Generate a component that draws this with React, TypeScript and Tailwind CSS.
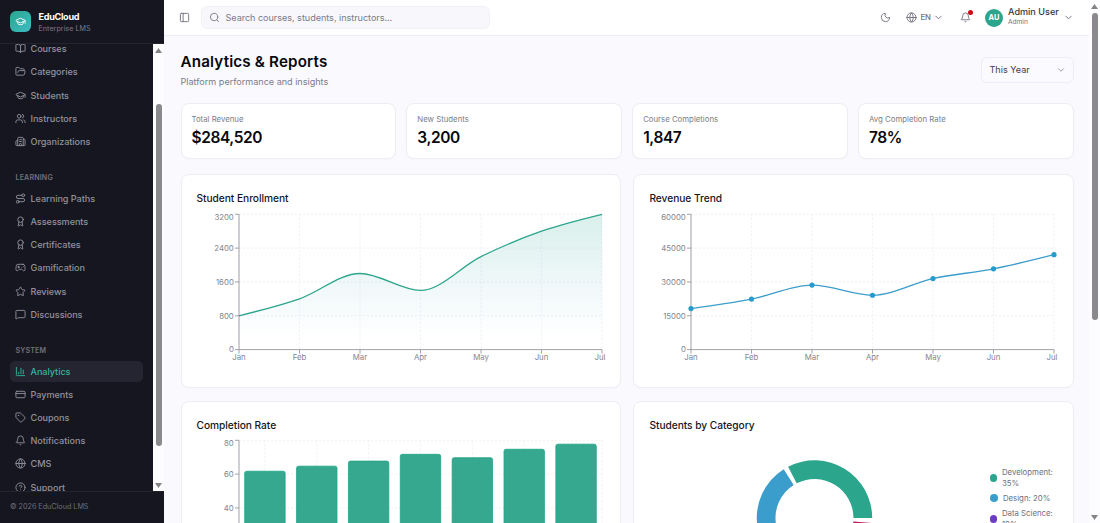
import React from 'react';
import {
  Award,
  Bell,
  BookOpen,
  Building2,
  ChartColumn,
  ChevronDown,
  CircleQuestionMark,
  CreditCard,
  FolderOpen,
  Gamepad2,
  Globe,
  GraduationCap,
  LucideIcon,
  MessageSquare,
  Moon,
  PanelLeft,
  Route,
  Search,
  Star,
  Tag,
  Users,
} from 'lucide-react';

interface NavEntry {
  label: string;
  icon: LucideIcon;
}

interface NavGroup {
  title?: string;
  items: NavEntry[];
}

const NAV: NavGroup[] = [
  {
    items: [
      { label: 'Courses', icon: BookOpen },
      { label: 'Categories', icon: FolderOpen },
      { label: 'Students', icon: GraduationCap },
      { label: 'Instructors', icon: Users },
      { label: 'Organizations', icon: Building2 },
    ],
  },
  {
    title: 'LEARNING',
    items: [
      { label: 'Learning Paths', icon: Route },
      { label: 'Assessments', icon: Award },
      { label: 'Certificates', icon: Award },
      { label: 'Gamification', icon: Gamepad2 },
      { label: 'Reviews', icon: Star },
      { label: 'Discussions', icon: MessageSquare },
    ],
  },
  {
    title: 'SYSTEM',
    items: [
      { label: 'Analytics', icon: ChartColumn },
      { label: 'Payments', icon: CreditCard },
      { label: 'Coupons', icon: Tag },
      { label: 'Notifications', icon: Bell },
      { label: 'CMS', icon: Globe },
      { label: 'Support', icon: CircleQuestionMark },
    ],
  },
];

const STATS = [
  { label: 'Total Revenue', value: '$284,520' },
  { label: 'New Students', value: '3,200' },
  { label: 'Course Completions', value: '1,847' },
  { label: 'Avg Completion Rate', value: '78%' },
];

const MONTHS = ['Jan', 'Feb', 'Mar', 'Apr', 'May', 'Jun', 'Jul'];
const ENROLLMENT = [800, 1200, 1800, 1400, 2200, 2800, 3200];
const REVENUE = [18200, 22400, 28600, 24100, 31500, 35800, 42100];
const COMPLETION = [62, 65, 68, 72, 70, 75, 78];

const CATEGORIES = [
  { name: 'Development', value: 35, color: '#2ca58d' },
  { name: 'Design', value: 20, color: '#3b9dcb' },
  { name: 'Data Science', value: 18, color: '#6d3cc4' },
  { name: 'Marketing', value: 15, color: '#e0a030' },
  { name: 'Business', value: 12, color: '#c2185b' },
];

// Plot area inside every chart
const LEFT = 42;
const RIGHT = 405;
const TOP = 3.3;
const HEIGHT = 135.3;
const BOTTOM = TOP + HEIGHT;

type Point = [number, number];

const toPoints = (values: number[], max: number): Point[] =>
  values.map((v, i) => [
    LEFT + (i * (RIGHT - LEFT)) / (values.length - 1),
    BOTTOM - (v / max) * HEIGHT,
  ]);

// Monotone cubic interpolation
const monotonePath = (pts: Point[]) => {
  const n = pts.length;
  const h = (pts[n - 1][0] - pts[0][0]) / (n - 1);
  const slopes = pts.slice(1).map((p, i) => (p[1] - pts[i][1]) / h);
  const tangents = pts.map((_, i) => {
    if (i === 0 || i === n - 1) return 0;
    const a = slopes[i - 1];
    const b = slopes[i];
    return (Math.sign(a) + Math.sign(b)) * Math.min(Math.abs(a), Math.abs(b), 0.25 * Math.abs(a + b));
  });
  tangents[0] = (3 * slopes[0] - tangents[1]) / 2;
  tangents[n - 1] = (3 * slopes[n - 2] - tangents[n - 2]) / 2;

  let d = `M${pts[0][0]},${pts[0][1]}`;
  for (let i = 1; i < n; i++) {
    const [x0, y0] = pts[i - 1];
    const [x1, y1] = pts[i];
    d += `C${x0 + h / 3},${y0 + (tangents[i - 1] * h) / 3} ${x1 - h / 3},${y1 - (tangents[i] * h) / 3} ${x1},${y1}`;
  }
  return d;
};

const Scrollbar: React.FC<{ thumb: string }> = ({ thumb }) => (
  <div className="flex w-[11px] shrink-0 flex-col items-center bg-[#fdfcff]">
    <svg className="mt-1 h-[5px] w-[7px] shrink-0" viewBox="0 0 7 5">
      <path d="M3.5 0L7 5H0z" fill="#858387" />
    </svg>
    <div className={`w-[6px] shrink-0 rounded-full bg-[#8b898d] ${thumb}`} />
    <svg className="mb-[3px] mt-auto h-[5px] w-[7px] shrink-0" viewBox="0 0 7 5">
      <path d="M0 0h7L3.5 5z" fill="#858387" />
    </svg>
  </div>
);

const Sidebar: React.FC = () => (
  <aside className="flex w-[164px] shrink-0 flex-col bg-[#161620]">
    <div className="flex h-[44px] shrink-0 items-center gap-[7.5px] border-b border-[#23232e] pl-[10px]">
      <div className="flex size-[21px] items-center justify-center rounded-[6px] bg-linear-to-br from-[#2ca58d] to-[#3dbdc4]">
        <GraduationCap className="size-[11px] text-white" />
      </div>
      <div className="pt-px">
        <div className="text-[9.1px] leading-[12px] font-bold tracking-[-0.3px] text-white">EduCloud</div>
        <div className="text-[7.1px] leading-[11px] tracking-[0.06px] text-[#7c7c87]">Enterprise LMS</div>
      </div>
    </div>

    <div className="flex min-h-0 flex-1">
      <nav className="min-w-0 flex-1 overflow-hidden pl-[10px] pr-[10px]">
        <div className="-mt-[5.6px]">
          {NAV.map((group, g) => (
            <div key={g}>
              {group.title && (
                <div className="h-[33.7px] pt-[18px] pl-[5.5px] text-[7.1px] leading-[12px] font-semibold tracking-[0.15px] text-[#71717c]">
                  {group.title}
                </div>
              )}
              {group.items.map(({ label, icon: Icon }) => {
                const active = label === 'Analytics';
                return (
                  <div
                    key={label}
                    className={`mb-[2.5px] flex h-[20.7px] items-center gap-[4.5px] rounded-[5px] pl-[5px] ${
                      active ? 'bg-[#242531] text-[#35b79b]' : 'text-[#92929c]'
                    }`}
                  >
                    <Icon className="size-[11px] shrink-0" />
                    <span className="text-[9.1px] leading-[13px] font-medium tracking-[-0.04px] whitespace-nowrap">
                      {label}
                    </span>
                  </div>
                );
              })}
            </div>
          ))}
        </div>
      </nav>
      <Scrollbar thumb="mt-[51px] h-[342px]" />
    </div>

    <div className="flex h-[32px] shrink-0 items-center border-t border-[#23232e] pl-[10px] text-[7.2px] text-[#6f6f7a]">
      © 2026 EduCloud LMS
    </div>
  </aside>
);

const Header: React.FC = () => (
  <header className="flex h-[36px] shrink-0 items-center border-b border-[#ededf5] bg-white pl-[15px] pr-[15px] text-[#71717f]">
    <PanelLeft className="size-[11px]" />
    <div className="ml-[11px] flex h-[23px] w-[289px] items-center gap-[5.5px] rounded-[6px] border border-[#f1f1f7] bg-[#f8f8fc] pl-[7px] text-[9.1px] tracking-[-0.04px] text-[#7a7a87]">
      <Search className="size-[11px]" />
      Search courses, students, instructors...
    </div>
    <div className="ml-auto flex items-center">
      <Moon className="size-[11px]" />
      <Globe className="ml-[15.5px] size-[11px]" />
      <span className="ml-[3px] text-[7.8px] font-medium">EN</span>
      <ChevronDown className="ml-[2px] size-[11px]" />
      <div className="relative ml-[16px]">
        <Bell className="size-[11px]" />
        <span className="absolute -top-[2px] -right-[1.5px] size-[5px] rounded-full bg-[#cf0a14]" />
      </div>
      <div className="ml-[14px] flex size-[18px] items-center justify-center rounded-full bg-[#2ca58d] text-[7.4px] font-bold text-white">
        AU
      </div>
      <div className="ml-[5px] w-[52px] pb-[2px] whitespace-nowrap">
        <div className="text-[9.1px] leading-[11px] font-medium text-[#34343f]">Admin User</div>
        <div className="text-[6.6px] leading-[11px]">Admin</div>
      </div>
      <ChevronDown className="ml-[3px] size-[11px]" />
    </div>
  </header>
);

const Axes: React.FC<{ ticks: number[]; gridX: number[]; labels?: boolean }> = ({ ticks, gridX, labels }) => (
  <g>
    <g stroke="#ececf4" strokeWidth="0.8" strokeDasharray="2 2">
      {ticks.map((t, i) => {
        const y = BOTTOM - (i * HEIGHT) / (ticks.length - 1);
        return <line key={t} x1={LEFT} x2={RIGHT} y1={y} y2={y} />;
      })}
      {gridX.map((x) => (
        <line key={x} x1={x} x2={x} y1={TOP} y2={BOTTOM} />
      ))}
    </g>
    <g stroke="#8c8c94" strokeWidth="0.8">
      <line x1={LEFT} x2={LEFT} y1={TOP} y2={BOTTOM} />
      <line x1={LEFT} x2={RIGHT} y1={BOTTOM} y2={BOTTOM} />
      {ticks.map((t, i) => {
        const y = BOTTOM - (i * HEIGHT) / (ticks.length - 1);
        return <line key={t} x1={LEFT - 4} x2={LEFT} y1={y} y2={y} />;
      })}
      {labels && gridX.map((x) => <line key={x} x1={x} x2={x} y1={BOTTOM} y2={BOTTOM + 4} />)}
    </g>
    <g fill="#84848f" fontSize="7.8">
      {ticks.map((t, i) => {
        const last = i === ticks.length - 1;
        const y = BOTTOM - (i * HEIGHT) / (ticks.length - 1) + (last ? 5.3 : 2.8);
        return (
          <text key={t} x={LEFT - 5.2} y={y} textAnchor="end">
            {t}
          </text>
        );
      })}
      {labels &&
        gridX.map((x, i) => (
          <text key={x} x={i === 6 ? x - 2 : x} y={BOTTOM + 10.6} textAnchor="middle">
            {MONTHS[i]}
          </text>
        ))}
    </g>
  </g>
);

const MONTH_X = MONTHS.map((_, i) => LEFT + (i * (RIGHT - LEFT)) / 6);

const EnrollmentChart: React.FC = () => {
  const line = monotonePath(toPoints(ENROLLMENT, 3200));
  return (
    <svg width="408" height="160" className="overflow-visible">
      <defs>
        <linearGradient id="enrollment" x1="0" y1="0" x2="0" y2="1">
          <stop offset="5%" stopColor="#2ca58d" stopOpacity="0.17" />
          <stop offset="90%" stopColor="#3b9dcb" stopOpacity="0" />
        </linearGradient>
      </defs>
      <Axes ticks={[0, 800, 1600, 2400, 3200]} gridX={MONTH_X} labels />
      <path d={`${line}L${RIGHT},${BOTTOM}L${LEFT},${BOTTOM}Z`} fill="url(#enrollment)" />
      <path d={line} fill="none" stroke="#2ca58d" strokeWidth="1.3" />
    </svg>
  );
};

const RevenueChart: React.FC = () => {
  const pts = toPoints(REVENUE, 60000);
  return (
    <svg width="408" height="160" className="overflow-visible">
      <Axes ticks={[0, 15000, 30000, 45000, 60000]} gridX={MONTH_X} labels />
      <path d={monotonePath(pts)} fill="none" stroke="#3b9dcb" strokeWidth="1.3" />
      {pts.map(([x, y]) => (
        <circle key={x} cx={x} cy={y} r="2.6" fill="#279bcb" />
      ))}
    </svg>
  );
};

const CompletionChart: React.FC = () => {
  const band = (RIGHT - LEFT) / COMPLETION.length;
  const centers = COMPLETION.map((_, i) => LEFT + band * (i + 0.5));
  return (
    <svg width="408" height="160" className="overflow-visible">
      <Axes ticks={[0, 20, 40, 60, 80]} gridX={[...centers, RIGHT]} />
      {COMPLETION.map((v, i) => {
        const h = (v / 80) * HEIGHT;
        return (
          <rect
            key={i}
            x={centers[i] - 20.2}
            y={BOTTOM - h + 0.5}
            width="40.4"
            height={h}
            rx="2"
            fill="#36a890"
            stroke="#1ea387"
            strokeWidth="0.8"
          />
        );
      })}
    </svg>
  );
};

const CategoryChart: React.FC = () => {
  const cx = 165.5;
  const cy = 81;
  const outer = 57.7;
  const inner = 39;
  const pad = 5;
  const at = (r: number, deg: number) => {
    const a = (deg * Math.PI) / 180;
    return `${cx + r * Math.cos(a)},${cy - r * Math.sin(a)}`;
  };

  let start = 0;
  const slices = CATEGORIES.map((c) => {
    const end = start + ((360 - pad * CATEGORIES.length) * c.value) / 100;
    const d = `M${at(outer, start)}A${outer},${outer} 0 0 0 ${at(outer, end)}L${at(inner, end)}A${inner},${inner} 0 0 1 ${at(inner, start)}Z`;
    start = end + pad;
    return <path key={c.name} d={d} fill={c.color} />;
  });

  return (
    <div className="flex">
      <svg width="341" height="160" className="shrink-0 overflow-visible">
        {slices}
      </svg>
      <div className="mt-[30px] flex w-[66px] shrink-0 flex-col gap-[4.8px] text-[7.8px] leading-[10.4px] text-[#6f6f7b]">
        {CATEGORIES.map((c) => {
          const wraps = c.name !== 'Design';
          return (
            <div key={c.name} className={`flex items-center ${wraps ? 'gap-[5px]' : 'gap-[4.5px]'}`}>
              <span
                className={wraps ? 'h-[8px] w-[6.5px] shrink-0 rounded-full' : 'size-[8px] shrink-0 rounded-full'}
                style={{ background: c.color }}
              />
              <span className="whitespace-nowrap">
                {c.name}:{wraps ? <br /> : ' '}
                {c.value}%
              </span>
            </div>
          );
        })}
      </div>
    </div>
  );
};

const ChartCard: React.FC<{ title: string; children: React.ReactNode }> = ({ title, children }) => (
  <section className="h-[214px] rounded-[8px] border border-[#ededf5] bg-white pt-[16px] pl-[15px] shadow-[0_1px_2px_rgba(20,20,60,0.02)]">
    <h2 className="mb-[4.5px] text-[10.2px] leading-[15px] font-medium tracking-[-0.04px] text-[#15151f]">{title}</h2>
    {children}
  </section>
);

const App: React.FC = () => {
  return (
    <div className="flex h-[523px] w-[1100px] overflow-hidden bg-[#f9f9fe] font-['Inter','Liberation_Sans',sans-serif]">
      <Sidebar />
      <div className="flex min-w-0 flex-1 flex-col">
        <Header />
        <main className="min-h-0 flex-1 overflow-hidden pt-[16px] pr-[15.5px] pl-[16.5px]">
          <div className="flex h-[51px] justify-between">
            <div>
              <h1 className="text-[15.2px] leading-[20px] font-semibold tracking-[0.16px] text-[#08080f]">
                Analytics &amp; Reports
              </h1>
              <p className="mt-[2.5px] text-[9.1px] leading-[13px] tracking-[-0.02px] text-[#7d7d89]">
                Platform performance and insights
              </p>
            </div>
            <div className="mt-[5px] flex h-[26px] w-[93px] items-center justify-between rounded-[6px] border border-[#ededf5] bg-[#fafaff] pr-[7px] pl-[8px] text-[9.1px] text-[#3f3f4c]">
              This Year
              <ChevronDown className="size-[10px] text-[#8a8a96]" />
            </div>
          </div>

          <div className="grid grid-cols-4 gap-[10.3px]">
            {STATS.map((s) => (
              <div
                key={s.label}
                className="h-[56px] rounded-[8px] border border-[#ededf5] bg-white pt-[10px] pl-[10px] shadow-[0_1px_2px_rgba(20,20,60,0.02)]"
              >
                <div className="text-[7.8px] leading-[11px] text-[#7d7d89]">{s.label}</div>
                <div className="mt-[3px] text-[15.5px] leading-[20px] font-semibold tracking-[-0.4px] text-[#08080f]">
                  {s.value}
                </div>
              </div>
            ))}
          </div>

          <div className="mt-[15px] grid grid-cols-2 gap-[12.9px]">
            <ChartCard title="Student Enrollment">
              <EnrollmentChart />
            </ChartCard>
            <ChartCard title="Revenue Trend">
              <RevenueChart />
            </ChartCard>
            <ChartCard title="Completion Rate">
              <CompletionChart />
            </ChartCard>
            <ChartCard title="Students by Category">
              <CategoryChart />
            </ChartCard>
          </div>
        </main>
      </div>
      <Scrollbar thumb="mt-[4px] h-[307px]" />
    </div>
  );
};

export default App;
